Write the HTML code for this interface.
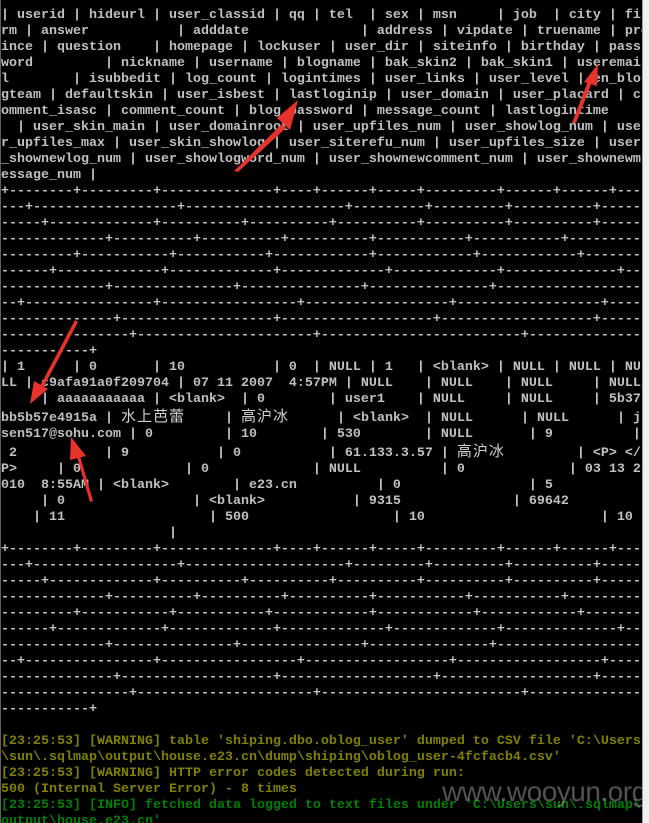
<!DOCTYPE html>
<html><head><meta charset="utf-8"><style>
html,body{margin:0;padding:0;background:#000;width:649px;height:823px;overflow:hidden;position:relative}
pre{position:absolute;left:1px;top:8px;margin:0;font-family:"Liberation Mono","Noto Sans CJK SC",monospace;font-size:13.33px;line-height:16px;color:#c0c0c0;font-weight:bold;white-space:pre}
.c{font-family:"Noto Sans CJK SC","WenQuanYi Zen Hei",sans-serif;font-weight:normal;font-size:15px;letter-spacing:1px;color:#d0d0d0}
.y{color:#808000}.g{color:#008000}
.rb{position:absolute;left:642px;top:0;width:7px;height:823px;background:#f0f0f0;border-left:1px solid #a0a0a0}
.lb{position:absolute;left:0;top:0;width:1px;height:823px;background:#606060}
.wm{position:absolute;left:442px;top:776px;font-family:"Liberation Sans",sans-serif;font-size:28px;color:rgba(150,150,150,0.55);letter-spacing:-0.5px}
svg{position:absolute;left:0;top:0}
</style></head><body>
<pre>| userid | hideurl | user_classid | qq | tel  | sex | msn     | job  | city | fi
rm | answer           | adddate              | address | vipdate | truename | prov
ince | question    | homepage | lockuser | user_dir | siteinfo | birthday | pass
word         | nickname | username | blogname | bak_skin2 | bak_skin1 | useremai
l        | isubbedit | log_count | logintimes | user_links | user_level | en_blo
gteam | defaultskin | user_isbest | lastloginip | user_domain | user_placard | c
omment_isasc | comment_count | blog_password | message_count | lastlogintime
  | user_skin_main | user_domainroot | user_upfiles_num | user_showlog_num | use
r_upfiles_max | user_skin_showlog | user_siterefu_num | user_upfiles_size | user
_shownewlog_num | user_showlogword_num | user_shownewcomment_num | user_shownewm
essage_num |
+--------+---------+--------------+----+------+-----+---------+------+------+---
---+------------------+--------------------+---------+---------+----------+-----
-----+-------------+----------+----------+----------+----------+----------+-----
-------------+----------+----------+----------+-----------+-----------+---------
---------+-----------+-----------+------------+------------+------------+-------
------+-------------+-------------+-------------+-------------+--------------+--
-------------+---------------+---------------+---------------+------------------
--+----------------+-----------------+------------------+------------------+----
--------------+-------------------+-------------------+-------------------+-----
----------------+----------------------+-------------------------+--------------
-----------+
| 1      | 0       | 10           | 0  | NULL | 1   | &lt;blank&gt; | NULL | NULL | NU
LL | c9afa91a0f209704 | 07 11 2007  4:57PM | NULL    | NULL    | NULL     | NULL
     | aaaaaaaaaaa | &lt;blank&gt;  | 0        | user1    | NULL     | NULL     | 5b37
bb5b57e4915a | <span class="c">水上芭蕾</span>     | <span class="c">高沪冰</span>      | &lt;blank&gt;  | NULL      | NULL      | j
sen517@sohu.com | 0         | 10        | 530        | NULL       | 9          |
 2           | 9           | 0           | 61.133.3.57 | <span class="c">高沪冰</span>         | &lt;P&gt; &lt;/
P&gt;     | 0             | 0             | NULL          | 0             | 03 13 2
010  8:55AM | &lt;blank&gt;        | e23.cn          | 0                | 5
     | 0                | &lt;blank&gt;           | 9315              | 69642
    | 11                  | 500                  | 10                      | 10
                     |
+--------+---------+--------------+----+------+-----+---------+------+------+---
---+------------------+--------------------+---------+---------+----------+-----
-----+-------------+----------+----------+----------+----------+----------+-----
-------------+----------+----------+----------+-----------+-----------+---------
---------+-----------+-----------+------------+------------+------------+-------
------+-------------+-------------+-------------+-------------+--------------+--
-------------+---------------+---------------+---------------+------------------
--+----------------+-----------------+------------------+------------------+----
--------------+-------------------+-------------------+-------------------+-----
----------------+----------------------+-------------------------+--------------
-----------+

<span class="y">[23:25:53] [WARNING] table 'shiping.dbo.oblog_user' dumped to CSV file 'C:\Users
\sun\.sqlmap\output\house.e23.cn\dump\shiping\oblog_user-4fcfacb4.csv'
[23:25:53] [WARNING] HTTP error codes detected during run:
500 (Internal Server Error) - 8 times</span>
<span class="g">[23:25:53] [INFO] fetched data logged to text files under 'C:\Users\sun\.sqlmap\
output\house.e23.cn'</span></pre>
<div class="wm">www.wooyun.org</div>
<div class="lb"></div>
<div class="rb"></div>
<svg width="649" height="823" viewBox="0 0 649 823">
<g fill="#e8322c">
<polygon points="234,171 238,172 286,128 282,124"/>
<polygon points="298,100 277,118 290,130"/>
<polygon points="572,123 576,123 592,82 588,81"/>
<polygon points="598,64 584,82 597,86"/>
<polygon points="75,320 78,322 43,388 40,386"/>
<polygon points="30,404 34,381 48,389"/>
<polygon points="90,502 93,501 80,456 77,457"/>
<polygon points="71,437 70,460 86,456"/>
</g>
</svg>
</body></html>
